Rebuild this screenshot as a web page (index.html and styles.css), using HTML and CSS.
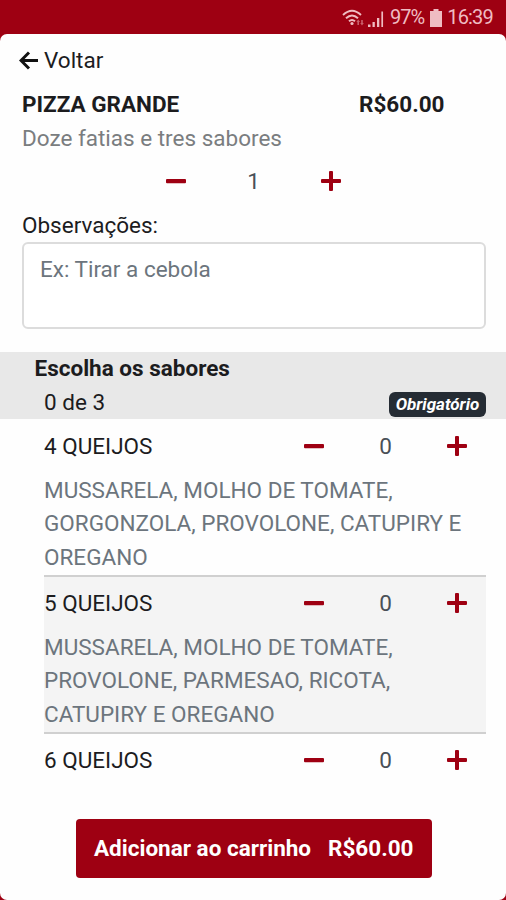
FILE: index.html
```html
<!DOCTYPE html>
<html lang="pt-br">
<head>
    <meta charset="UTF-8">
    <title>Pizza Grande</title>
    <link rel="stylesheet" href="styles.css">
</head>
<body>
    <svg class="defs" width="0" height="0">
        <symbol id="minus" viewBox="0 0 20 20"><rect x="0" y="8" width="20" height="4.2" rx="1"/></symbol>
        <symbol id="plus" viewBox="0 0 20 20"><path d="M9 0h2q1 0 1 1v7h7q1 0 1 1v2q0 1-1 1h-7v7q0 1-1 1h-2q-1 0-1-1v-7h-7q-1 0-1-1v-2q0-1 1-1h7v-7q0-1 1-1z"/></symbol>
    </svg>

    <div class="status">
        <svg class="wifi" width="23" height="18" viewBox="0 0 23 18">
            <path d="M1 6Q10 -2.500 19 6M4 9.300Q10 3.500 16 9.300M7 12.300Q10 9.500 13 12.300" fill="none" stroke="currentColor" stroke-width="1.900"/>
            <circle cx="10" cy="14.500" r="1.600" fill="currentColor"/>
            <path class="dim" d="M16.200 10.500l1.800 2.500h-1v3h-1.600v-3h-1zM20 16.500l-1.800-2.500h1v-3h1.600v3h1z"/>
        </svg>
        <svg class="signal" width="17" height="17" viewBox="0 0 17 17">
            <path d="M0 17v-2.500h2.500v2.500zM4.500 17v-5h2.300v5zM9 17v-9h2.300v9z" fill="currentColor"/>
            <path d="M14.200 1.500v15.500" fill="none" stroke="currentColor" stroke-width="1.700"/>
        </svg>
        <span class="percent">97%</span>
        <svg class="battery" width="12" height="18" viewBox="0 0 12 18"><path d="M3.500 0h5v2h3.500v16h-12v-16h3.500z" fill="currentColor"/></svg>
        <span class="clock">16:39</span>
    </div>

    <div class="page">
        <div class="back">
            <svg width="20" height="19" viewBox="0 0 20 19"><path d="M10 1.500L2 9.500L10 17.500M2.500 9.500H19" fill="none" stroke="#111" stroke-width="3"/></svg>
            <span>Voltar</span>
        </div>

        <div class="product">
            <div class="title">
                <b>PIZZA GRANDE</b>
                <b class="price">R$60.00</b>
            </div>
            <p class="muted">Doze fatias e tres sabores</p>
            <div class="counter">
                <svg class="icon"><use href="#minus"/></svg>
                <span>1</span>
                <svg class="icon"><use href="#plus"/></svg>
            </div>
            <label class="label" for="obs">Observações:</label>
            <textarea id="obs" placeholder="Ex: Tirar a cebola"></textarea>
        </div>

        <div class="group">
            <h2>Escolha os sabores</h2>
            <div class="group-info">
                <span>0 de 3</span>
                <i class="badge">Obrigatório</i>
            </div>
        </div>

        <ul class="flavors">
            <li>
                <div class="row">
                    <span class="name">4 QUEIJOS</span>
                    <svg class="icon"><use href="#minus"/></svg>
                    <span class="count">0</span>
                    <svg class="icon"><use href="#plus"/></svg>
                </div>
                <p>MUSSARELA, MOLHO DE TOMATE, GORGONZOLA, PROVOLONE, CATUPIRY E OREGANO</p>
            </li>
            <li>
                <div class="row">
                    <span class="name">5 QUEIJOS</span>
                    <svg class="icon"><use href="#minus"/></svg>
                    <span class="count">0</span>
                    <svg class="icon"><use href="#plus"/></svg>
                </div>
                <p>MUSSARELA, MOLHO DE TOMATE, PROVOLONE, PARMESAO, RICOTA, CATUPIRY E OREGANO</p>
            </li>
            <li>
                <div class="row">
                    <span class="name">6 QUEIJOS</span>
                    <svg class="icon"><use href="#minus"/></svg>
                    <span class="count">0</span>
                    <svg class="icon"><use href="#plus"/></svg>
                </div>
            </li>
        </ul>

        <button class="add">
            <span>Adicionar ao carrinho</span>
            <span>R$60.00</span>
        </button>
    </div>
</body>
</html>
```

FILE: styles.css
```css
*{
    margin: 0;
    padding: 0;
    box-sizing: border-box;
}
body{
    height: 900px;
    display: flex;
    flex-direction: column;
    overflow: hidden;
    background: #9e0012;
    color: #1c1c1e;
    font: 22.5px/33.75px Roboto, sans-serif;
}
.defs{
    position: absolute;
}
.status{
    height: 34px;
    flex: none;
    display: flex;
    align-items: center;
    padding: 2px 13px 0 0;
    justify-content: flex-end;
    color: #efbcc2;
    font-size: 20px;
    letter-spacing: -0.8px;
}
.wifi{
    margin-right: 3px;
}
.dim{
    fill: #c9606c;
}
.signal{
    margin-right: 5px;
}
.percent{
    letter-spacing: -1px;
}
.battery{
    margin: 0 5px 0 6px;
}
.page{
    flex: 1;
    display: flex;
    flex-direction: column;
    background: #fefefe;
    border-radius: 7px;
}
.back{
    display: flex;
    align-items: center;
    gap: 5px;
    padding: 10px 0 0 19px;
}
.product{
    padding: 10px 20px 0 22px;
}
.title{
    display: flex;
}
.title b{
    width: 337px;
}
.title .price{
    width: auto;
}
b, h2{
    font-weight: 700;
}
.muted{
    color: #7a7d80;
}
.icon{
    width: 20px;
    height: 20px;
    fill: #9e0012;
}
.counter{
    display: flex;
    align-items: center;
    justify-content: space-between;
    width: 175px;
    margin: 9px 0 10px 144px;
    padding-top: 1px;
    color: #495057;
}
.counter .icon{
    margin-bottom: 2px;
}
.label{
    display: block;
}
textarea{
    display: block;
    width: 464px;
    height: 87px;
    margin-top: -1px;
    padding: 9px 16px;
    border: 2px solid #dcdcdc;
    border-radius: 6px;
    background: #fff;
    font: inherit;
    resize: none;
}
textarea::placeholder{
    color: #6c757d;
}
.group{
    height: 67px;
    margin-top: 23px;
    padding: 0 20px 0 34.5px;
    background: #e8e8e8;
}
h2{
    font-size: 22.5px;
}
.group-info{
    display: flex;
    justify-content: space-between;
    padding-left: 9.5px;
}
.badge{
    width: 97px;
    height: 25px;
    margin-top: 6px;
    border-radius: 6px;
    background: #252c34;
    color: #fff;
    text-align: center;
    font-size: 17px;
    font-weight: 700;
    line-height: 25px;
}
.flavors{
    list-style: none;
    margin: 0 20.5px 0 44px;
    padding-top: 1px;
}
.flavors li{
    padding-top: 10px;
    border-bottom: 2px solid #d0d0d0;
}
.flavors li:nth-child(even){
    background: #f4f4f4;
}
.flavors li:last-child{
    border: 0;
}
.row{
    display: flex;
    align-items: center;
    padding-right: 18.5px;
}
.row .icon{
    margin-bottom: 1px;
}
.name{
    flex: 1;
}
.count{
    width: 123px;
    text-align: center;
    color: #495057;
}
.flavors p{
    padding-top: 10px;
    color: #6c757d;
}
.add{
    width: 356px;
    height: 59px;
    margin: auto 0 22px 76px;
    display: flex;
    align-items: center;
    justify-content: space-between;
    padding: 0 18.5px 2px 18px;
    border: 0;
    border-radius: 4px;
    background: #9e0012;
    color: #fff;
    font: 700 22.5px Roboto, sans-serif;
}
```
